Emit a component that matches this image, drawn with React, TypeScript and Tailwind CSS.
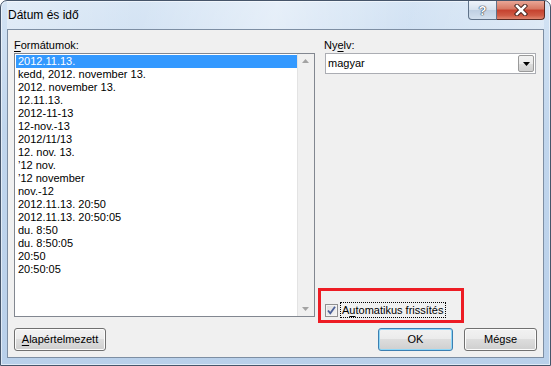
import React from 'react';

const formats = [
  '2012.11.13.',
  'kedd, 2012. november 13.',
  '2012. november 13.',
  '12.11.13.',
  '2012-11-13',
  '12-nov.-13',
  '2012/11/13',
  '12. nov. 13.',
  '’12 nov.',
  '’12 november',
  'nov.-12',
  '2012.11.13. 20:50',
  '2012.11.13. 20:50:05',
  'du. 8:50',
  'du. 8:50:05',
  '20:50',
  '20:50:05',
];

// Win7 style push button
const Button: React.FC<{ children: React.ReactNode; width: string; isDefault?: boolean }> = ({ children, width, isDefault }) => (
  <div
    className={`${width} h-[23px] flex items-center justify-center rounded-[3px] border ${
      isDefault
        ? 'border-[#3c7fb1] shadow-[inset_0_0_0_1px_#8fd7f7]'
        : 'border-[#707070] shadow-[inset_0_0_0_1px_#fcfcfc]'
    } bg-[linear-gradient(180deg,#f2f2f2_0%,#ebebeb_50%,#dddddd_50%,#cfcfcf_100%)]`}
  >
    {children}
  </div>
);

const Arrow: React.FC<{ up?: boolean; color?: string }> = ({ up, color = '#a3a3a3' }) => (
  <svg width="7" height="4" viewBox="0 0 7 4">
    <path d={up ? 'M3.5 0 L7 4 L0 4 Z' : 'M0 0 L7 0 L3.5 4 Z'} fill={color} />
  </svg>
);

export default function App() {
  return (
    <div className="w-[551px] h-[366px] bg-white font-['Liberation_Sans',Arial,sans-serif] text-[11px] text-black">
      <div className="flex h-full flex-col rounded-t-[7px] border border-[#46556a] bg-[linear-gradient(180deg,#d3e3f4_0%,#c1d6ed_35%,#b9d0ea_100%)] px-[6px] pb-[7px] shadow-[inset_0_0_0_1px_rgba(255,255,255,0.55)]">
        {/* Title bar */}
        <div className="relative flex h-[28px] items-start justify-between bg-[linear-gradient(100deg,rgba(255,255,255,0.35)_0%,rgba(255,255,255,0.1)_25%,rgba(255,255,255,0.45)_50%,rgba(255,255,255,0.05)_75%,rgba(255,255,255,0.3)_100%)]">
          <span className="pl-[1px] pt-[7px] text-[12px] leading-[15px]">Dátum és idő</span>
          <div className="-mr-[1px] flex">
            <div className="flex h-[19px] w-[29px] items-center justify-center rounded-bl-[4px] border border-t-0 border-[#5f7289] bg-[linear-gradient(180deg,#eef3fa_0%,#d5e1ee_50%,#bfcfe2_50%,#d3e0ee_100%)]">
              <span className="text-[13px] font-bold leading-none text-white [text-shadow:0_0_1px_#2d3a4c,0_0_1px_#2d3a4c,0_0_1px_#2d3a4c]">?</span>
            </div>
            <div className="flex h-[19px] w-[48px] items-center justify-center rounded-br-[4px] border border-l-0 border-t-0 border-[#5a2a22] bg-[linear-gradient(180deg,#e9a696_0%,#d67762_45%,#c5412e_50%,#cf5b45_80%,#e0866f_100%)]">
              <svg width="14" height="12" viewBox="0 0 14 12">
                <path d="M3 2 L11 10 M11 2 L3 10" stroke="#3a1a14" strokeWidth="4.4" strokeLinecap="square" />
                <path d="M3 2 L11 10 M11 2 L3 10" stroke="#ffffff" strokeWidth="2.6" strokeLinecap="square" />
              </svg>
            </div>
          </div>
        </div>

        {/* Client area */}
        <div className="flex flex-1 flex-col border border-[#7d8ea3] bg-[#f0f0f0] pl-[6px] pr-[6px] pt-[7px] pb-[5px]">
          <div className="flex">
            {/* Formats list */}
            <div className="flex w-[301px] flex-col">
              <div className="h-[16px] leading-[16px]">
                <span className="underline underline-offset-2">F</span>ormátumok:
              </div>
              <div className="flex h-[264px] border border-[#828790] bg-white">
                <div className="flex-1 pl-[1px] pt-[1px]">
                  {formats.map((f, i) => (
                    <div
                      key={f}
                      className={`h-[13px] whitespace-pre pl-[2px] leading-[13px] ${i === 0 ? 'bg-[#3399ff] text-white' : ''}`}
                    >
                      {f}
                    </div>
                  ))}
                </div>
                <div className="flex w-[17px] flex-col items-center justify-between bg-[#f0f0f0] py-[5px] shadow-[inset_1px_0_0_#e3e3e3]">
                  <Arrow up />
                  <Arrow />
                </div>
              </div>
            </div>

            {/* Language */}
            <div className="ml-[9px] flex w-[212px] flex-col">
              <div className="h-[16px] leading-[16px]">
                Ny<span className="underline underline-offset-2">e</span>lv:
              </div>
              <div className="ml-[1px] flex h-[21px] items-center border border-[#abadb3] bg-white">
                <span className="flex-1 pl-[2px]">magyar</span>
                <div className="mr-[1px] flex h-[17px] w-[16px] items-center justify-center rounded-[2px] border border-[#9a9a9a] bg-[linear-gradient(180deg,#f2f2f2_0%,#ebebeb_50%,#dddddd_50%,#cfcfcf_100%)]">
                  <Arrow color="#000000" />
                </div>
              </div>

              <div className="relative -mb-[1px] mt-auto ml-[1px] flex items-center">
                <div className="flex h-[13px] w-[13px] items-center justify-center border border-[#8f8f8f] bg-[linear-gradient(135deg,#dcdcdc_0%,#f6f6f6_100%)] shadow-[inset_0_0_0_1px_#f4f4f4]">
                  <svg width="11" height="11" viewBox="0 0 11 11">
                    <path d="M2 5.5 L4.3 8.3 L9 1.8" fill="none" stroke="#4a5f97" strokeWidth="1.8" />
                  </svg>
                </div>
                <div className="ml-[2px] h-[16px] border border-dotted border-black px-[1px] leading-[14px]">
                  A<span className="underline underline-offset-2">u</span>tomatikus frissítés
                </div>
                <div className="pointer-events-none absolute left-[-7px] top-[-14px] h-[35px] w-[146px] border-[3px] border-[#ed1c24]" />
              </div>
            </div>
          </div>

          {/* Buttons */}
          <div className="mt-[11px] flex items-center">
            <Button width="w-[92px]">
              <span>
                <span className="underline underline-offset-2">A</span>lapértelmezett
              </span>
            </Button>
            <div className="ml-auto flex gap-[11px]">
              <Button width="w-[75px]" isDefault>
                OK
              </Button>
              <Button width="w-[73px]">Mégse</Button>
            </div>
          </div>
        </div>
      </div>
    </div>
  );
}
